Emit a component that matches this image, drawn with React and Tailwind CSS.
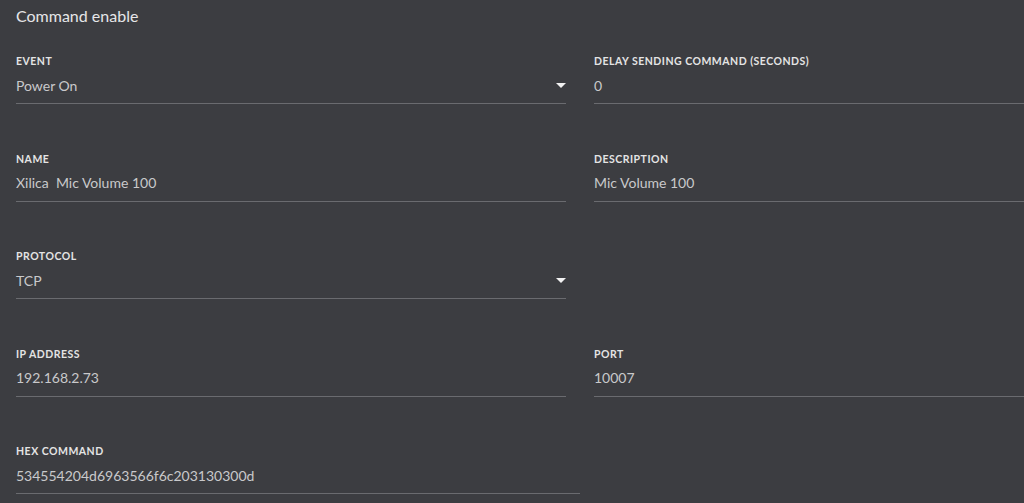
const rows = [
  [
    { label: "Event", value: "Power On", select: true },
    { label: "Delay sending command (seconds)", value: "0" },
  ],
  [
    { label: "Name", value: "Xilica\u00a0 Mic Volume 100" },
    { label: "Description", value: "Mic Volume 100" },
  ],
  [{ label: "Protocol", value: "TCP", select: true }, null],
  [
    { label: "IP Address", value: "192.168.2.73" },
    { label: "Port", value: "10007" },
  ],
];

function Field({ label, value, select, wide }) {
  return (
    <div className={`shrink-0 ${wide ? "w-[564px]" : "w-[550px]"}`}>
      <div className="h-[12px] text-[10.5px] leading-[12px] font-bold uppercase tracking-[0.5px] text-[#e4e4e4]">
        {label}
      </div>
      <div className="flex items-center justify-between h-[37px] pt-[8px] pb-[8px] border-b border-[#6a6b6f]">
        <span className="text-[14px] text-[#c9c9cb]">{value}</span>
        {select && (
          <svg width="10" height="5" viewBox="0 0 10 5">
            <path d="M0 0 L10 0 L5 5 Z" fill="#f2f2f2" />
          </svg>
        )}
      </div>
    </div>
  );
}

export default function App() {
  return (
    <div
      className="w-[1024px] h-[503px] overflow-hidden bg-[#3c3d41] pl-[16px]"
      style={{ fontFamily: "Lato, 'Open Sans', sans-serif" }}
    >
      <div className="h-[55px] pt-[6px] text-[16px] leading-[20px] text-[#e6e6e8]">
        Command enable
      </div>
      <div className="flex flex-col gap-y-[48.5px]">
        {rows.map((row, i) => (
          <div key={i} className="flex gap-[28px]">
            {row.map((f, j) =>
              f ? <Field key={j} {...f} /> : <div key={j} className="w-[550px] shrink-0" />
            )}
          </div>
        ))}
        <div className="flex">
          <Field label="Hex Command" value="534554204d6963566f6c203130300d" wide />
        </div>
      </div>
    </div>
  );
}
